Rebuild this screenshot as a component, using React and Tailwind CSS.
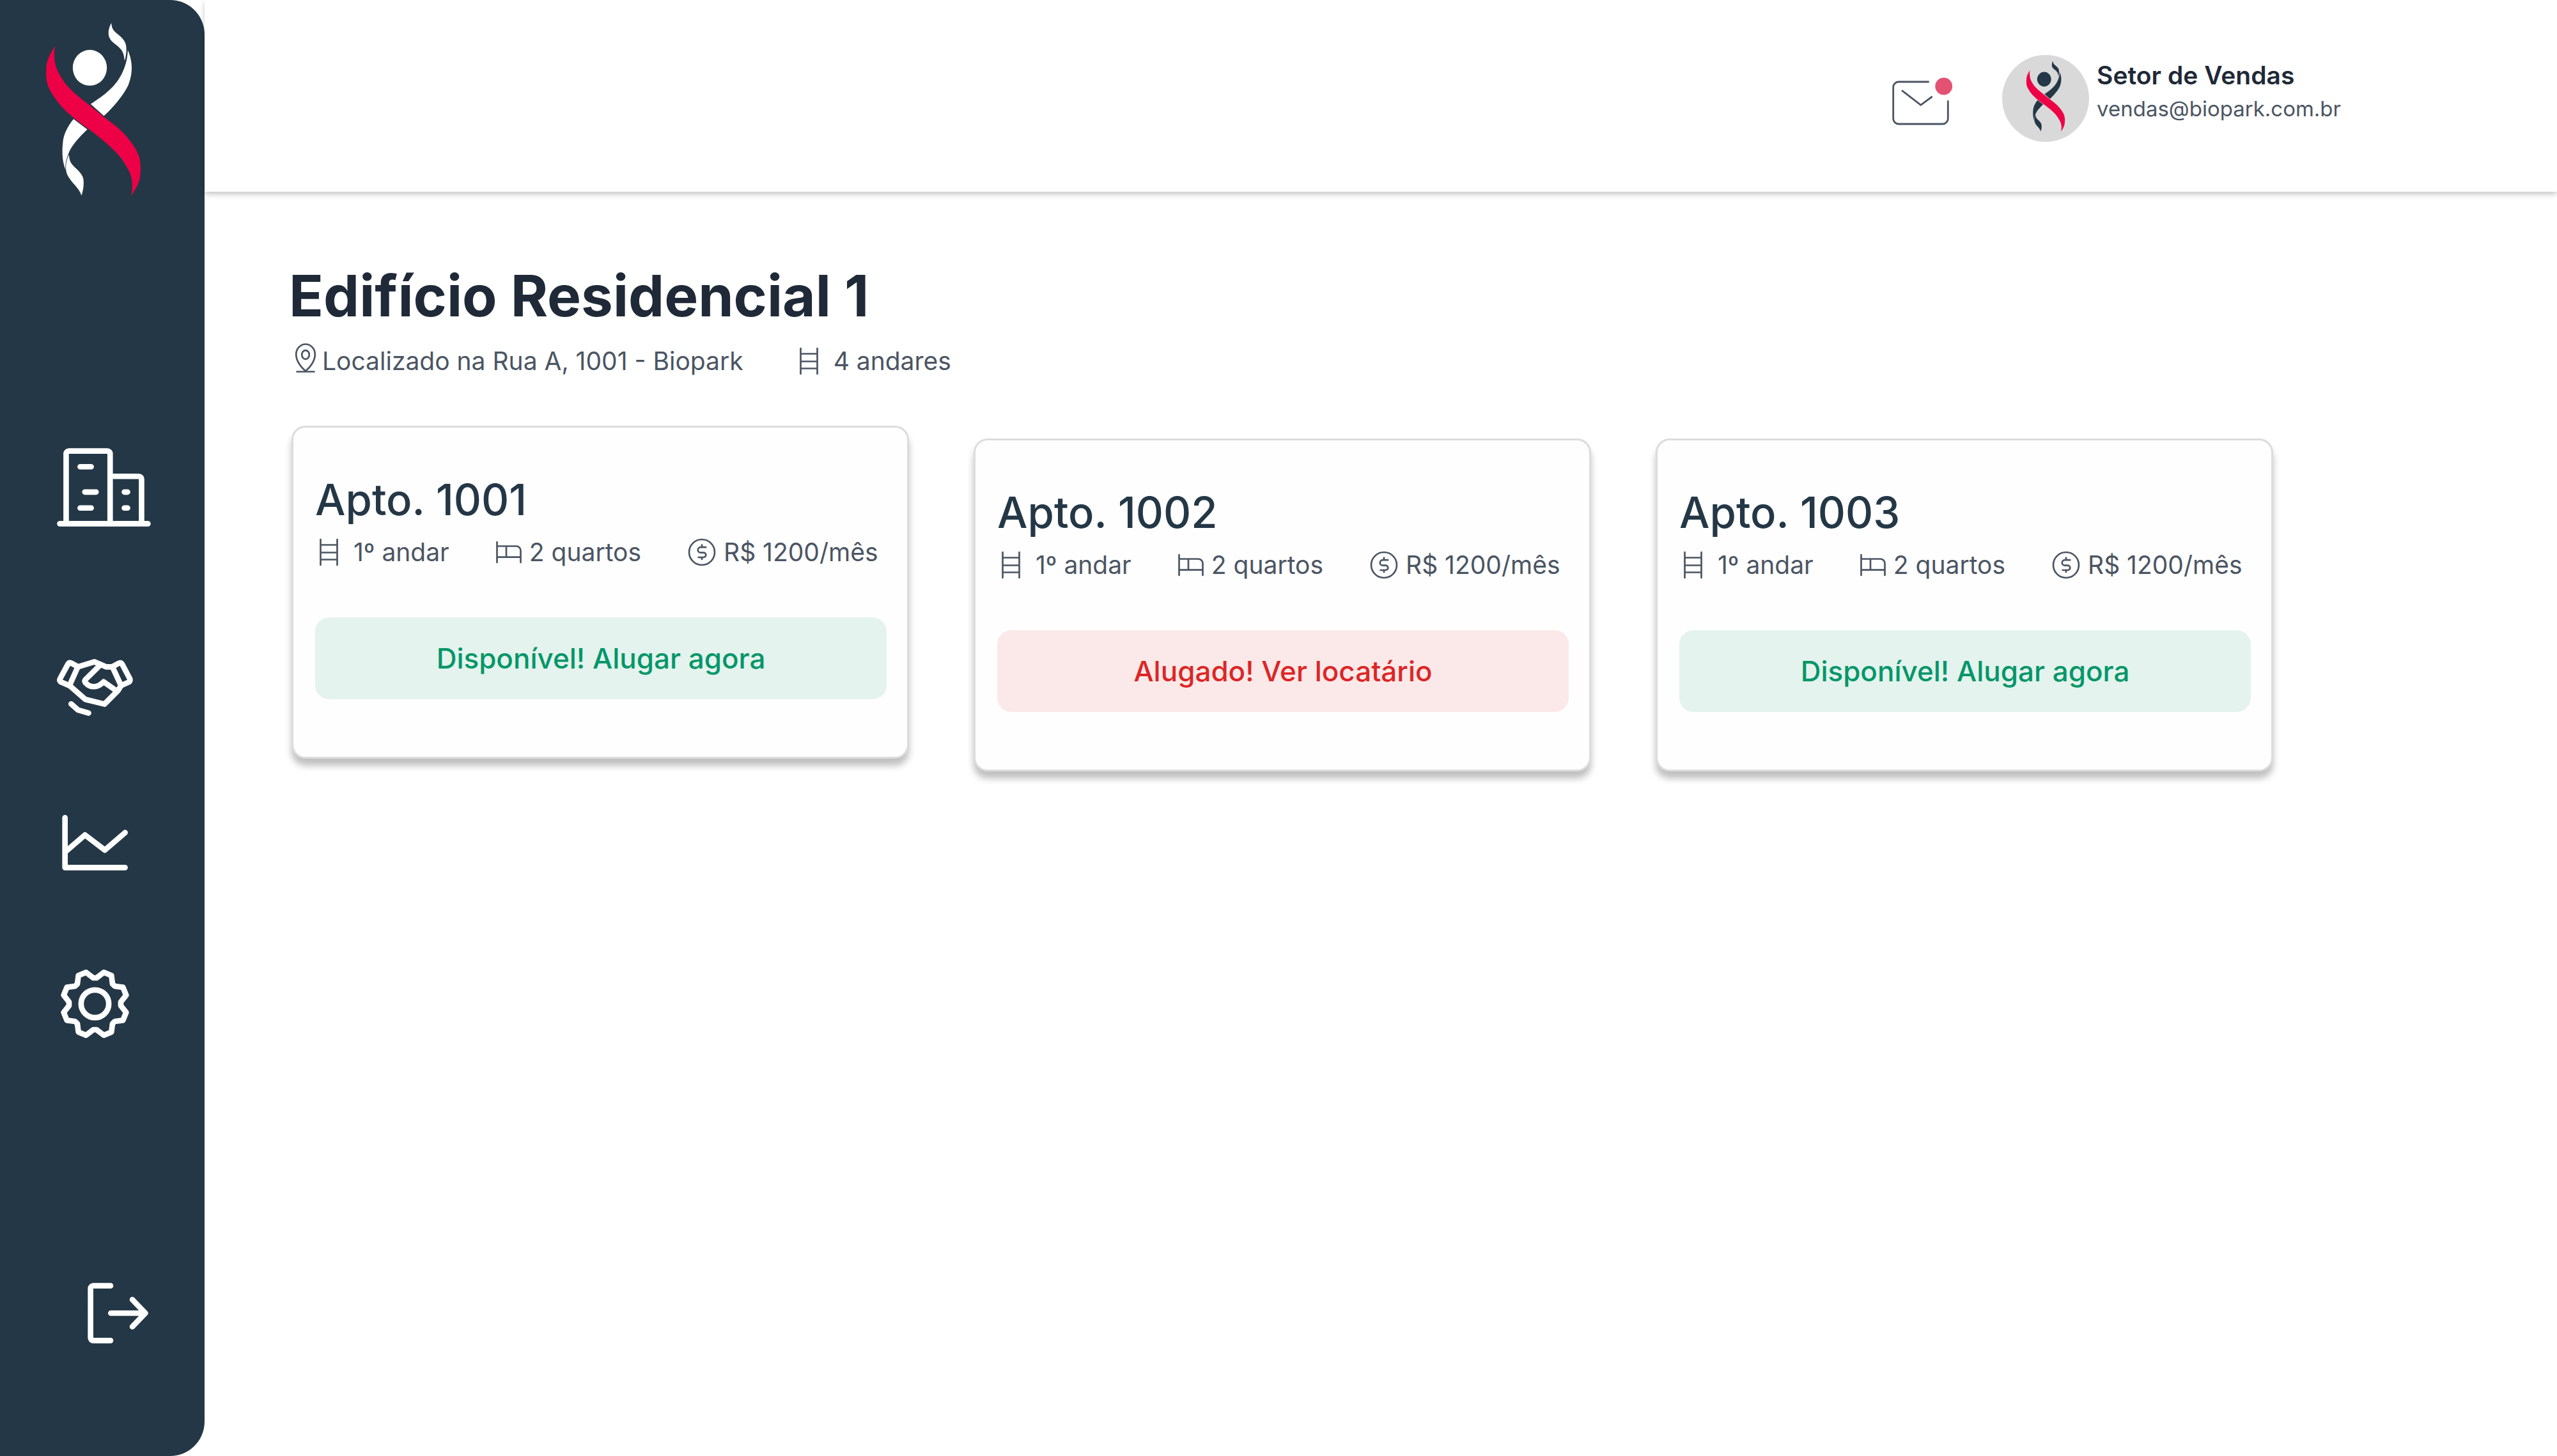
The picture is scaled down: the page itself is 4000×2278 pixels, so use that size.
import React from "react";

function Figure({ className, bodyColor }) {
  return (
    <svg viewBox="210 105 455 815" className={className} role="img" aria-label="Biopark">
      <g fill={bodyColor}>
        <ellipse cx="421" cy="318" rx="80" ry="84" />
        <path d="M599 235C598 265 592 300 575 337C545 405 490 445 425 488L487 543C530 505 580 445 601 400C617 360 618 330 617 305C614 275 608 255 599 235Z" />
        <path d="M522 108C508 132 504 160 515 181C525 202 550 210 568 233C580 249 582 265 584 285C592 262 596 225 588 203C580 180 556 165 540 150C527 138 524 128 522 108Z" />
        <path d="M345 558C318 590 298 630 295 665C290 705 291 755 307 797C304 765 314 738 326 708C343 675 375 640 409 607Z" />
        <path d="M323 725C312 750 304 780 312 810C322 840 348 862 365 885C373 897 378 905 382 917C391 890 395 860 390 835C383 810 355 790 340 773C328 760 325 745 323 725Z" />
      </g>
      <path
        fill="#ed0046"
        d="M258 216C240 245 219 275 217 320C215 365 217 390 235 424C262 475 305 520 345 552C385 585 430 613 470 647C510 680 545 712 568 742C595 782 615 815 618 845C622 870 620 890 615 917C630 895 650 865 655 835C661 800 661 760 650 728C635 690 605 650 570 615C530 577 480 545 440 510C400 478 355 445 325 413C300 385 272 345 262 310C252 275 253 245 258 216Z"
      />
    </svg>
  );
}

const thick = {
  fill: "none",
  stroke: "currentColor",
  strokeWidth: 26,
  strokeLinecap: "round",
  strokeLinejoin: "round",
  "aria-hidden": true,
};

function BuildingsIcon() {
  return (
    <svg viewBox="3 94 525 370" className="h-[123px] w-[175px]" {...thick}>
      <path d="M100 450H515M130 450V121a13 13 0 0 1 13-13H324a13 13 0 0 1 13 13V450M337 227H472a13 13 0 0 1 13 13V450M196 182H248M218 301H271M196 376H248M404 301H419M404 376H419" />
    </svg>
  );
}

function HandshakeIcon() {
  return (
    <svg viewBox="87 95 358 267" className="h-[89px] w-[119px]" {...thick}>
      <path d="M186 131L154 114Q145 110 139 119L102 187Q97 198 108 204L146 220Z" />
      <path d="M348 131L378 115Q388 110 394 119L430 187Q434 199 424 204L389 220Z" />
      <path d="M188 131L264 108L320 132H345" />
      <path d="M284 130L222 191C216 197 217 203 224 209C246 232 280 230 307 202L365 243" />
      <path d="M147 220L221 285L311 307L374 244L389 220" />
      <path d="M154 306L187 335L236 349" />
    </svg>
  );
}

function ChartIcon() {
  return (
    <svg viewBox="111 825 309 261" className="h-[87px] w-[103px]" {...thick}>
      <path d="M125 838V1072H407M125 1000L219 919L312 990L407 908" />
    </svg>
  );
}

function GearIcon() {
  return (
    <svg viewBox="30 30 321 321" className="h-[107px] w-[107px]" {...thick}>
      <circle cx="190.5" cy="190.5" r="65" />
      <path d="M183 69H198L232 43L268 58L273 97L284 108L322 113L337 150L312 182V199L337 231L322 268L284 273L273 284L268 323L232 338L198 312H183L149 338L113 323L108 284L97 273L59 268L44 231L69 199V182L44 150L59 113L97 108L108 97L113 58L149 43Z" />
    </svg>
  );
}

function LogoutIcon() {
  return (
    <svg viewBox="0 0 285 285" className="h-[95px] w-[95px]" {...thick}>
      <path d="M108 14H27a13 13 0 0 0-13 13V258a13 13 0 0 0 13 13H108M109 142.5H271M210 79L271 142.5L210 206" />
    </svg>
  );
}

function MailIcon() {
  return (
    <svg viewBox="0 0 96 86" className="h-[86px] w-24" fill="none" aria-hidden="true">
      <path
        stroke="#4b5563"
        strokeWidth="2.8"
        d="M58.7 17H11a8.3 8.3 0 0 0-8.3 8.3V74.7a8.3 8.3 0 0 0 8.3 8.3H80a8.3 8.3 0 0 0 8.3-8.3V46.3M16 30.3L45.7 53.3L63.7 40"
      />
      <circle cx="81.7" cy="24" r="13.4" fill="#e35273" />
    </svg>
  );
}

const thin = {
  fill: "none",
  stroke: "currentColor",
  strokeWidth: 2.7,
  strokeLinecap: "round",
  strokeLinejoin: "round",
  "aria-hidden": true,
};

function LadderIcon() {
  return (
    <svg viewBox="0 0 48 44" className="h-11 w-12 shrink-0" {...thin}>
      <path d="M8.5 2V42M34.5 2V42M8.5 10.5H34.5M8.5 22.5H34.5M8.5 33.5H34.5" />
    </svg>
  );
}

function BedIcon() {
  return (
    <svg viewBox="0 0 40 44" className="h-11 w-10 shrink-0" {...thin}>
      <path d="M1.5 6V38M1.5 12.5H31.5a7 7 0 0 1 7 7V38M1.5 29.7H38.5M16 12.5V29.7" />
    </svg>
  );
}

function CoinIcon() {
  return (
    <svg viewBox="0 0 44 44" className="h-11 w-11 shrink-0" {...thin}>
      <circle cx="22" cy="22" r="20" />
      <path d="M22 10.5V14M22 29.8V33M28.2 14.2H20a4.2 4.2 0 0 0 0 8.4H24.6a3.7 3.7 0 0 1 0 7.4H16.6" />
    </svg>
  );
}

function PinIcon() {
  return (
    <svg viewBox="0 0 36 56" className="h-14 w-9 shrink-0" {...thin}>
      <path d="M18 43.5C11 38 3.2 27.5 3.2 17.5a14.8 16 0 0 1 29.6 0C32.8 27.5 25 38 18 43.5ZM4.5 44.5H31.5" />
      <ellipse cx="18" cy="18" rx="5.8" ry="6.8" />
    </svg>
  );
}

const navItems = [
  { label: "Edifícios", Icon: BuildingsIcon, className: "block pb-[52px]" },
  { label: "Locações", Icon: HandshakeIcon, className: "block" },
  { label: "Relatórios", Icon: ChartIcon, className: "block" },
  { label: "Configurações", Icon: GearIcon, className: "block" },
];

const apartments = [
  { name: "Apto. 1001", available: true, className: "" },
  { name: "Apto. 1002", available: false, className: "mt-5" },
  { name: "Apto. 1003", available: true, className: "mt-5" },
];

function Sidebar() {
  return (
    <aside className="flex w-80 shrink-0 flex-col rounded-r-[54px] bg-[#243746] pt-[35px] pb-44 text-white">
      <a href="#inicio" aria-label="Início" className="mr-7 self-center">
        <Figure className="h-[272px] w-[152px]" bodyColor="#ffffff" />
      </a>
      <nav className="mt-[394px] flex flex-col items-center gap-[155px] pr-[23px]">
        {navItems.map(({ label, Icon, className }) => (
          <a key={label} href="#nav" aria-label={label} className={className}>
            <Icon />
          </a>
        ))}
      </nav>
      <button type="button" aria-label="Sair" className="mt-auto mr-[88px] self-end">
        <LogoutIcon />
      </button>
    </aside>
  );
}

function Header() {
  return (
    <header className="flex h-[300px] items-start justify-end bg-white pt-[86px] pr-[338px] shadow-[0_4px_8px_rgba(0,0,0,0.22)]">
      <div className="flex items-center gap-[77px]">
        <button type="button" aria-label="Mensagens">
          <MailIcon />
        </button>
        <div className="flex items-start gap-3">
          <div className="flex size-[136px] items-center justify-center rounded-full bg-[#d9d9d9] pb-2">
            <Figure className="h-[111px] w-[62px]" bodyColor="#243746" />
          </div>
          <div className="pt-1.5">
            <p className="text-[39px] leading-[52px] font-semibold text-[#1f2937]">Setor de Vendas</p>
            <p className="text-[33px] leading-[52px] text-[#4b5563]">vendas@biopark.com.br</p>
          </div>
        </div>
      </div>
    </header>
  );
}

function ApartmentCard({ name, available, className }) {
  return (
    <article className={className}>
      <div className="rounded-[22px] border-3 border-[#dcdcdc] bg-[#fefefe] pt-[73px] pr-8 pb-[90px] pl-[34px] shadow-[0_11px_11px_rgba(0,0,0,0.25)]">
        <h2 className="text-[67px] leading-[80px] font-medium text-[#243746]">{name}</h2>
        <ul className="mt-5 flex gap-[73px] text-[39px] leading-[44px] whitespace-nowrap text-[#4b5563]">
          <li className="flex items-center gap-3">
            <LadderIcon />
            1º andar
          </li>
          <li className="flex items-center gap-3">
            <BedIcon />
            2 quartos
          </li>
          <li className="flex items-center gap-3">
            <CoinIcon />
            R$ 1200/mês
          </li>
        </ul>
        <button
          type="button"
          className={
            available
              ? "mt-20 h-32 w-full rounded-[22px] bg-[#e4f3ed] text-[44px] font-medium text-[#059669]"
              : "mt-20 h-32 w-full rounded-[22px] bg-[#fbe9e9] text-[44px] font-medium text-[#dc2626]"
          }
        >
          {available ? "Disponível! Alugar agora" : "Alugado! Ver locatário"}
        </button>
      </div>
    </article>
  );
}

export default function App() {
  return (
    <div className="flex min-h-screen bg-white font-[Inter,sans-serif]">
      <Sidebar />
      <div className="min-w-0 flex-1">
        <Header />
        <main className="pt-[107px] pr-[444px] pl-[132px]">
          <h1 className="text-[89px] leading-[112px] font-bold text-[#1f2937]">Edifício Residencial 1</h1>
          <div className="mt-[18px] flex items-center gap-[81px] pl-2 text-[39px] leading-[56px] text-[#4b5563]">
            <p className="flex items-center gap-2">
              <PinIcon />
              Localizado na Rua A, 1001 - Biopark
            </p>
            <p className="flex items-center gap-3">
              <LadderIcon />4 andares
            </p>
          </div>
          <section aria-label="Apartamentos" className="mt-[73px] ml-1 grid grid-cols-3 items-start gap-[101px]">
            {apartments.map((apartment) => (
              <ApartmentCard key={apartment.name} {...apartment} />
            ))}
          </section>
        </main>
      </div>
    </div>
  );
}
